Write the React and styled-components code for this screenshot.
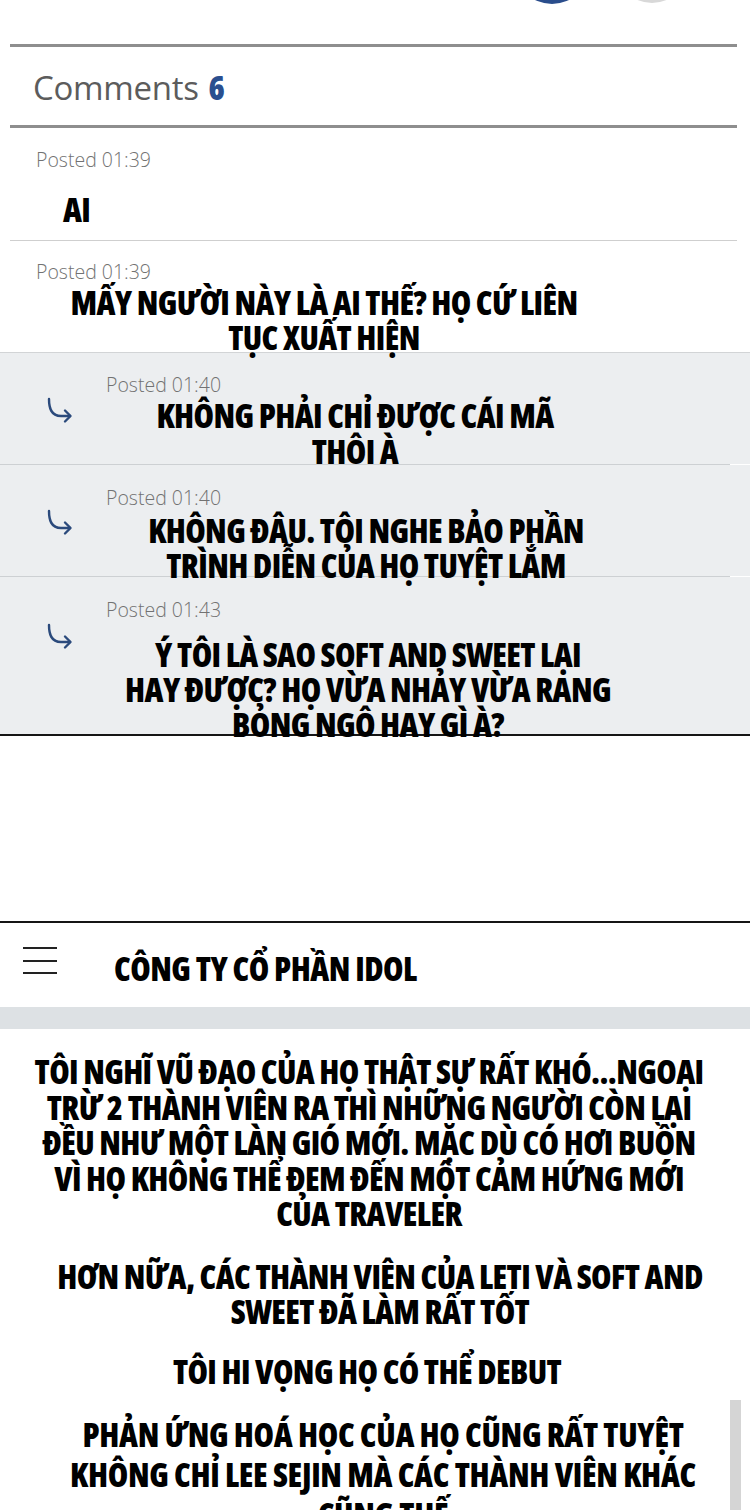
import React from "react";
import styled, { createGlobalStyle } from "styled-components";

const GlobalStyle = createGlobalStyle`
  html, body { margin: 0; padding: 0; background: #ffffff; }
  body { overflow: hidden; }
  * { box-sizing: border-box; }
`;

const Page = styled.div`
  position: relative;
  width: 750px;
  height: 1510px;
  overflow: hidden;
  background: #ffffff;
  font-family: "Open Sans", "Noto Sans", sans-serif;
`;

/* ---------- top of the comment panel ---------- */
const TopBar = styled.div`
  display: flex;
  justify-content: flex-end;
  gap: 24px;
  height: 44px;
  padding-right: 60px;
  overflow: hidden;
`;

const RoundButton = styled.div`
  width: 76px;
  height: 76px;
  border-radius: 50%;
  margin-top: ${(p) => p.$lift}px;
  background: ${(p) => p.$color};
`;

const Rule = styled.div`
  height: ${(p) => p.$h || 1}px;
  margin: 0 ${(p) => p.$right ?? 0}px 0 ${(p) => p.$left ?? 0}px;
  background: ${(p) => p.$color};
`;

const CommentsHeader = styled.div`
  height: 78px;
  display: flex;
  align-items: center;
  padding: 2px 0 0 33px;
  font-size: 33px;
  font-weight: 400;
  color: #5c5c5c;
  letter-spacing: -0.3px;
`;

const Count = styled.span`
  margin-left: 10px;
  font-weight: 800;
  font-stretch: 75%;
  color: #2a4f8f;
`;

/* ---------- comments ---------- */
const CommentRow = styled.div`
  height: ${(p) => p.$h}px;
  padding-top: ${(p) => p.$pad}px;
  padding-left: 36px;
`;

const ReplyRow = styled.div`
  display: flex;
  height: ${(p) => p.$h}px;
  background: #eceef0;
`;

const ArrowCell = styled.div`
  width: 106px;
  flex: none;
  padding: ${(p) => p.$top}px 0 0 45px;
  color: #2b4a7c;
`;

const ReplyBody = styled.div`
  flex: 1;
  padding-top: ${(p) => p.$pad}px;
`;

const Posted = styled.div`
  font-size: 19.5px;
  line-height: 24px;
  font-weight: 300;
  color: #727272;
`;

const Bubble = styled.div`
  margin-top: ${(p) => p.$gap}px;
  margin-left: ${(p) => p.$left || 0}px;
  width: ${(p) => (p.$width ? p.$width + "px" : "auto")};
  text-align: ${(p) => p.$align || "center"};
`;

const MangaLine = styled.div`
  font-family: "Open Sans", sans-serif;
  font-weight: 800;
  font-stretch: 75%;
  font-size: 33px;
  line-height: ${(p) => p.$lh || 35}px;
  letter-spacing: ${(p) => p.$ls ?? -0.6}px;
  color: #000;
  white-space: nowrap;
`;

const ReplyDivider = styled.div`
  height: 1px;
  margin-right: 20px;
  background: #cdd0d3;
`;

const PanelEnd = styled.div`
  height: 2px;
  background: #151515;
`;

const Gap = styled.div`
  height: ${(p) => p.$h}px;
`;

/* ---------- app bar of the second screen ---------- */
const AppBar = styled.div`
  display: flex;
  align-items: center;
  height: 84px;
  padding: 0 0 4px 23px;
`;

const Burger = styled.div`
  display: flex;
  flex-direction: column;
  gap: 10.5px;
  width: 34px;
  margin-top: -5px;
  span {
    display: block;
    height: 2px;
    background: #222;
  }
`;

const Title = styled.div`
  margin-left: 57px;
  margin-top: 10px;
  font-weight: 800;
  font-stretch: 75%;
  font-size: 33px;
  letter-spacing: -0.5px;
  color: #000;
`;

const Band = styled.div`
  height: 22px;
  background: #dde1e4;
`;

const Article = styled.div`
  padding-top: 25px;
  display: flex;
  flex-direction: column;
`;

const Para = styled.div`
  text-align: center;
  margin-top: ${(p) => p.$gap || 0}px;
  padding-left: ${(p) => Math.max(0, p.$shift || 0) * 2}px;
  padding-right: ${(p) => Math.max(0, -(p.$shift || 0)) * 2}px;
`;

const ScrollThumb = styled.div`
  position: absolute;
  left: 730px;
  top: 1400px;
  width: 11px;
  height: 110px;
  background: #d5d5d5;
`;

function ReplyArrow() {
  return (
    <svg width="30" height="30" viewBox="0 0 30 30" fill="none">
      <path
        d="M4 3 C4 12 6 20 16 20 H25"
        stroke="currentColor"
        strokeWidth="2.4"
        strokeLinecap="round"
      />
      <path
        d="M20 14.5 L25.5 20 L20 25.5"
        stroke="currentColor"
        strokeWidth="2.4"
        strokeLinecap="round"
        strokeLinejoin="round"
      />
    </svg>
  );
}

const Lines = ({ lines, lh, ls }) =>
  lines.map((l, i) => (
    <MangaLine key={i} $lh={lh} $ls={ls}>
      {l}
    </MangaLine>
  ));

const replies = [
  {
    time: "01:40",
    h: 111,
    pad: 20,
    arrow: 43,
    gap: 1,
    left: -8,
    lh: 36,
    lines: ["KHÔNG PHẢI CHỈ ĐƯỢC CÁI MÃ", "THÔI À"],
  },
  {
    time: "01:40",
    h: 111,
    pad: 21,
    arrow: 43,
    gap: 3,
    left: 3,
    lines: ["KHÔNG ĐÂU. TÔI NGHE BẢO PHẦN", "TRÌNH DIỄN CỦA HỌ TUYỆT LẮM"],
  },
  {
    time: "01:43",
    h: 157,
    pad: 21,
    arrow: 45,
    gap: 15,
    left: 5,
    lines: [
      "Ý TÔI LÀ SAO SOFT AND SWEET LẠI",
      "HAY ĐƯỢC? HỌ VỪA NHẢY VỪA RANG",
      "BỎNG NGÔ HAY GÌ À?",
    ],
  },
];

const article = [
  {
    gap: 0,
    shift: -6,
    lines: [
      "TÔI NGHĨ VŨ ĐẠO CỦA HỌ THẬT SỰ RẤT KHÓ...NGOẠI",
      "TRỪ 2 THÀNH VIÊN RA THÌ NHỮNG NGƯỜI CÒN LẠI",
      "ĐỀU NHƯ MỘT LÀN GIÓ MỚI. MẶC DÙ CÓ HƠI BUỒN",
      "VÌ HỌ KHÔNG THỂ ĐEM ĐẾN MỘT CẢM HỨNG MỚI",
      "CỦA TRAVELER",
    ],
  },
  {
    gap: 27,
    shift: 5,
    lines: ["HƠN NỮA, CÁC THÀNH VIÊN CỦA LETI VÀ SOFT AND", "SWEET ĐÃ LÀM RẤT TỐT"],
  },
  { gap: 24, shift: -8, lines: ["TÔI HI VỌNG HỌ CÓ THỂ DEBUT"] },
  {
    gap: 26,
    shift: 8,
    lh: 40,
    ls: -0.3,
    lines: [
      "PHẢN ỨNG HOÁ HỌC CỦA HỌ CŨNG RẤT TUYỆT",
      "KHÔNG CHỈ LEE SEJIN MÀ CÁC THÀNH VIÊN KHÁC",
      "CŨNG THẾ",
    ],
  },
];

export default function App() {
  return (
    <Page>
      <GlobalStyle />
      <TopBar>
        <RoundButton $color="#2a4d8c" $lift={-72} />
        <RoundButton $color="#d8d8d8" $lift={-73} />
      </TopBar>
      <Rule $h={3} $left={10} $right={13} $color="#8e8e8e" />
      <CommentsHeader>
        Comments<Count>6</Count>
      </CommentsHeader>
      <Rule $h={3} $left={10} $right={13} $color="#8e8e8e" />

      <CommentRow $h={112} $pad={20}>
        <Posted>Posted 01:39</Posted>
        <Bubble $gap={20} $left={27} $align="left">
          <MangaLine>AI</MangaLine>
        </Bubble>
      </CommentRow>
      <Rule $left={10} $right={13} $color="#cfcfcf" />
      <CommentRow $h={111} $pad={19}>
        <Posted>Posted 01:39</Posted>
        <Bubble $gap={1} $width={576}>
          <Lines lines={["MẤY NGƯỜI NÀY LÀ AI THẾ? HỌ CỨ LIÊN", "TỤC XUẤT HIỆN"]} />
        </Bubble>
      </CommentRow>
      <Rule $color="#d2d4d6" />

      {replies.map((r, i) => (
        <React.Fragment key={i}>
          {i > 0 && <ReplyDivider />}
          <ReplyRow $h={r.h}>
            <ArrowCell $top={r.arrow}>
              <ReplyArrow />
            </ArrowCell>
            <ReplyBody $pad={r.pad}>
              <Posted>Posted {r.time}</Posted>
              <Bubble $gap={r.gap} $left={r.left} $width={514}>
                <Lines lines={r.lines} lh={r.lh} ls={r.ls} />
              </Bubble>
            </ReplyBody>
          </ReplyRow>
        </React.Fragment>
      ))}
      <PanelEnd />

      <Gap $h={185} />
      <PanelEnd />

      <AppBar>
        <Burger>
          <span />
          <span />
          <span />
        </Burger>
        <Title>CÔNG TY CỔ PHẦN IDOL</Title>
      </AppBar>
      <Band />

      <Article>
        {article.map((p, i) => (
          <Para key={i} $gap={p.gap} $shift={p.shift}>
            <Lines lines={p.lines} lh={p.lh || 35.5} ls={p.ls} />
          </Para>
        ))}
      </Article>

      <ScrollThumb />
    </Page>
  );
}
